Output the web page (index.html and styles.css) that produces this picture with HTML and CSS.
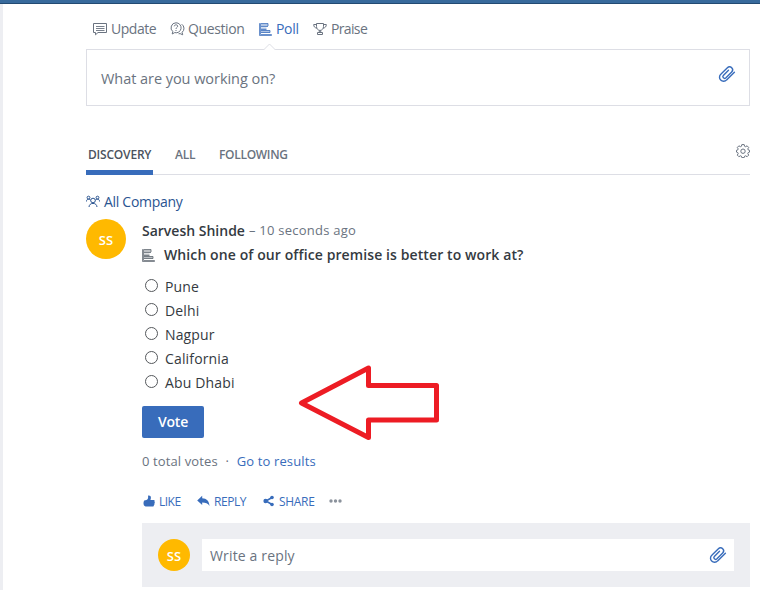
FILE: index.html
```html
<!DOCTYPE html>
<html lang="en">
<head>
    <meta charset="UTF-8">
    <meta name="viewport" content="width=device-width, initial-scale=1.0">
    <title>All Company - Discovery</title>
    <link rel="stylesheet" href="styles.css">
</head>
<body>
    <!-- shared icons -->
    <svg class="sprite" width="0" height="0">
        <symbol id="icon-poll" viewBox="0 0 13 13">
            <path d="M.5.5h1v11h11v1H.5z" fill="none" stroke="currentColor" stroke-opacity=".75"/>
            <path d="M2 1h7v2H2zM2 4.500h5.500v1.500H2zM2 7.500h9v2H2z" fill="currentColor" fill-opacity=".4"/>
            <path d="M2 .5h7M9 .5v2.500M2 3.500h7M2 6.500h5.500M2 9.500h9v-2H2" fill="none" stroke="currentColor" stroke-width=".8"/>
        </symbol>
        <symbol id="icon-clip" viewBox="0 0 18 18">
            <path d="M16.400 7.200 8.600 14.900a4 4 0 0 1-5.900.2 4 4 0 0 1 .1-5.800l6.600-6.600a3 3 0 0 1 4.300 0 3 3 0 0 1 0 4.200l-6 6a1.700 1.700 0 0 1-2.400-2.400l5.200-5.200" fill="none" stroke="currentColor" stroke-width="1.400" stroke-linecap="round"/>
        </symbol>
    </svg>

    <div class="topbar"></div>
    <div class="page">
        <div class="content">
            <div class="publisher-tabs">
                <a class="pub-tab update">
                    <svg width="15" height="14" viewBox="0 0 15 14" fill="none" stroke="currentColor"><path d="M.5 1.500h13v9H5l-2.500 2.300v-2.300h-2z"/><path d="M3 4.500h8.500M3 6.500h8.500M3 8.500h8.500" stroke-width=".9"/></svg>
                    <span>Update</span>
                </a>
                <a class="pub-tab question">
                    <svg width="15" height="14" viewBox="0 0 15 14" fill="none" stroke="currentColor"><path d="M6 .8a5 5 0 0 0-3.200 8.800L2.200 12l2.500-1.400A5 5 0 1 0 6 .8z"/><path d="M4.200 4.300c.2-2 3.500-1.900 3.500-.1 0 1.300-1.700 1.200-1.700 2.700M6 8v1M11.700 2.200a5 5 0 0 1 .4 8.100l.6 2.500-2.600-1.200-1.500.2"/></svg>
                    <span>Question</span>
                </a>
                <a class="pub-tab poll active">
                    <svg width="13" height="13"><use href="#icon-poll"/></svg>
                    <span>Poll</span>
                </a>
                <a class="pub-tab praise">
                    <svg width="14" height="14" viewBox="0 0 14 14" fill="none" stroke="currentColor"><path d="M3.500 1.500h7v3c0 2.400-1.500 3.700-3.500 4-2-.3-3.500-1.600-3.500-4zM3.500 2.500H.7c0 2.200 1 3.300 3.200 3.600M10.500 2.500h2.800c0 2.200-1 3.300-3.200 3.600M6.300 8.500v2M7.700 8.500v2M4.500 12.500v-2h5v2z"/></svg>
                    <span>Praise</span>
                </a>
            </div>

            <div class="publisher-box">
                <span>What are you working on?</span>
                <svg class="clip" width="18" height="18"><use href="#icon-clip"/></svg>
                <svg class="notch" width="13" height="8" viewBox="0 0 13 8"><path d="M0 7.500 6.500 1 13 7.500V8H0z" fill="#fff"/><path d="M.5 7 6.500 1l6 6" fill="none" stroke="#dddee5"/></svg>
            </div>

            <div class="feed-tabs">
                <a class="feed-tab discovery active">DISCOVERY</a>
                <a class="feed-tab all">ALL</a>
                <a class="feed-tab following">FOLLOWING</a>
                <svg class="gear" width="14" height="14" viewBox="0 0 14 14" fill="none" stroke="currentColor"><path d="M5.800.6h2.400l.4 1.700 1 .4 1.500-.9 1.600 1.700-.9 1.400.4 1 1.300.4v1.800l-1.300.5-.4 1 .9 1.500-1.600 1.600-1.500-.9-1 .4-.4 1.400H5.800l-.4-1.400-1-.4-1.500.9-1.600-1.600.9-1.500-.4-1L.5 8.100V6.300l1.300-.4.4-1-.9-1.400 1.600-1.700 1.500.9 1-.4z"/><circle cx="7" cy="7.200" r="2.200"/></svg>
            </div>

            <a class="group">
                <svg width="14" height="13" viewBox="0 0 14 13" fill="none" stroke="currentColor"><circle cx="7" cy="5.500" r="2.300"/><path d="M3 12c.2-2.300 1.700-3.600 4-3.600s3.800 1.300 4 3.600"/><circle cx="2.500" cy="2.600" r="1.400"/><circle cx="11.500" cy="2.600" r="1.400"/><path d="M.4 6.500C.5 4.900 1.300 4.200 2.600 4.200c.9 0 1.500.3 2 .9M13.600 6.500c-.1-1.600-.9-2.300-2.200-2.300-.9 0-1.500.3-2 .9"/></svg>
                <span>All Company</span>
            </a>

            <div class="post">
                <div class="avatar">SS</div>
                <div class="post-body">
                    <div class="byline"><b>Sarvesh Shinde</b><span class="time">– 10 seconds ago</span></div>
                    <div class="poll-title">
                        <svg width="13" height="13"><use href="#icon-poll"/></svg>
                        <span>Which one of our office premise is better to work at?</span>
                    </div>
                    <div class="options">
                        <label><input type="radio" name="office"><span>Pune</span></label>
                        <label><input type="radio" name="office"><span>Delhi</span></label>
                        <label><input type="radio" name="office"><span>Nagpur</span></label>
                        <label><input type="radio" name="office"><span>California</span></label>
                        <label><input type="radio" name="office"><span>Abu Dhabi</span></label>
                    </div>
                    <button class="vote-btn">Vote</button>
                    <div class="totals">
                        <span class="count">0 total votes</span>
                        <span class="dot">·</span>
                        <a>Go to results</a>
                    </div>
                    <div class="actions">
                        <a class="like">
                            <svg width="13" height="13" viewBox="0 0 13 13" fill="currentColor"><path d="M1.200 5.500 3.500 5C5.300 4.300 5.300 2.500 5 .8 6.500.2 7.800 1 7.900 2.500c.1 1-.2 1.700-.5 2.500h3.300c1.100 0 1.300 1.200.7 1.700.7.500.5 1.400-.1 1.700.4.600.200 1.300-.4 1.600.2.900-.3 1.500-1.200 1.500H2.500L1 10.500C.3 9 .3 7 1.200 5.500z"/></svg>
                            <span>LIKE</span>
                        </a>
                        <a class="reply">
                            <svg width="13" height="12" viewBox="0 0 13 12" fill="currentColor"><path d="M5.200.8v2.500c4.300.2 7 2.700 7.300 7.700C11 8.400 8.600 7.500 5.200 7.500V10L.2 5.400z"/></svg>
                            <span>REPLY</span>
                        </a>
                        <a class="share">
                            <svg width="12" height="12" viewBox="0 0 12 12" fill="currentColor"><path d="M9 2.500 3 6l6 3.500" fill="none" stroke="currentColor" stroke-width="1.600"/><circle cx="9" cy="2.500" r="1.800"/><circle cx="2.600" cy="6" r="2.200"/><circle cx="9" cy="9.500" r="1.800"/></svg>
                            <span>SHARE</span>
                        </a>
                        <svg class="more" width="13" height="4" viewBox="0 0 13 4" fill="currentColor"><circle cx="2" cy="2" r="1.700"/><circle cx="6.500" cy="2" r="1.700"/><circle cx="11" cy="2" r="1.700"/></svg>
                    </div>
                    <div class="reply-area">
                        <div class="avatar small">SS</div>
                        <div class="reply-input">
                            <span>Write a reply</span>
                            <svg class="clip" width="18" height="18"><use href="#icon-clip"/></svg>
                        </div>
                    </div>
                </div>
            </div>
        </div>
    </div>

    <!-- callout pointing at the vote button -->
    <svg class="arrow" width="144" height="80" viewBox="0 0 144 80"><path d="M4.500 40 71.500 5v17.500h68v34.500h-68v17.500z" fill="none" stroke="#ed1c24" stroke-width="5" stroke-linejoin="round"/></svg>
</body>
</html>
```

FILE: styles.css
```css
* {
    box-sizing: border-box;
}

body {
    margin: 0;
    height: 590px;
    overflow: hidden;
    background: #fff;
    color: #343a41;
    font-family: 'Open Sans', 'Noto Sans', sans-serif;
    font-size: 14px;
}

svg {
    display: block;
    flex: none;
}

.sprite {
    position: absolute;
}

span, b, a {
    white-space: nowrap;
}

.topbar {
    height: 4px;
    background: #386a9c;
    border-bottom: 1px solid #234a72;
}

.page {
    height: 586px;
    border-left: 3px solid #edeef2;
    padding: 11px 10px 0 83px;
}

.publisher-tabs {
    display: flex;
    height: 28px;
    padding: 0 0 0 7px;
    color: #6a7380;
}

.pub-tab {
    display: flex;
    align-items: center;
    height: 28px;
    gap: 3px;
}

.pub-tab span {
    margin-top: -1px;
}

.update { width: 77px; letter-spacing: -0.45px; }
.question { width: 89px; letter-spacing: -0.4px; }
.poll { width: 54px; gap: 4px; letter-spacing: -0.3px; }
.praise { gap: 4px; letter-spacing: -0.65px; }

.pub-tab.active {
    color: #386cbb;
}

.publisher-box {
    position: relative;
    display: flex;
    justify-content: space-between;
    height: 57px;
    margin-top: 6px;
    padding: 15px 13px 0 14px;
    border: 1px solid #dddee5;
    color: #6a7380;
    font-size: 14.5px;
    line-height: 28px;
    letter-spacing: -0.05px;
}

.clip {
    color: #386cbb;
}

.notch {
    position: absolute;
    left: 176px;
    top: -7px;
}

.feed-tabs {
    display: flex;
    height: 41px;
    margin-top: 28px;
    border-bottom: 1px solid #dddee5;
    color: #6a7380;
    font-size: 12px;
    font-weight: 600;
}

.feed-tab {
    height: 41px;
    line-height: 42px;
}

.discovery { width: 67px; padding-left: 2px; margin-right: 22px; letter-spacing: -0.2px; }
.all { width: 44px; letter-spacing: -0.2px; }
.following { letter-spacing: -0.3px; }

.feed-tab.active {
    border-bottom: 5px solid #386cbb;
    color: #4b535e;
}

.gear {
    margin: 10px 0 0 auto;
}

.group {
    display: flex;
    align-items: center;
    gap: 4px;
    height: 20px;
    margin-top: 16px;
    color: #2a5491;
    letter-spacing: -0.3px;
}

.post {
    display: flex;
    gap: 16px;
    margin-top: 8px;
}

.avatar {
    flex: none;
    width: 40px;
    height: 40px;
    border-radius: 50%;
    background: #ffb900;
    color: #fff;
    text-align: center;
    font-size: 13px;
    font-weight: 600;
    line-height: 42px;
}

.avatar.small {
    width: 32px;
    height: 32px;
    line-height: 34px;
}

.post-body {
    flex: 1;
}

.byline {
    display: flex;
    gap: 4px;
    height: 24px;
    line-height: 23px;
}

.byline b {
    font-weight: 600;
}

.time {
    color: #6a7380;
    font-size: 13px;
    letter-spacing: 0.25px;
}

.poll-title {
    display: flex;
    align-items: center;
    gap: 9px;
    height: 24px;
    font-weight: 600;
    letter-spacing: 0.1px;
}

.poll-title span {
    margin-top: -2px;
}

.poll-title svg {
    color: #5c646d;
}

.options {
    margin-top: 7px;
    letter-spacing: 0.15px;
}

.options label {
    display: flex;
    align-items: center;
    height: 24px;
}

.options input {
    appearance: none;
    width: 13px;
    height: 13px;
    margin: 0 7px 2px 3px;
    border: 1px solid #55585c;
    border-radius: 50%;
}

.vote-btn {
    display: block;
    width: 62px;
    height: 32px;
    margin-top: 12px;
    padding: 0;
    border: none;
    border-radius: 2px;
    background: #386cbb;
    color: #fff;
    font: 600 14px/32px 'Open Sans', 'Noto Sans', sans-serif;
    letter-spacing: -0.2px;
}

.totals {
    display: flex;
    height: 20px;
    margin-top: 13px;
    color: #6a7380;
    font-size: 13px;
    line-height: 20px;
    letter-spacing: 0.12px;
}

.dot {
    width: 19px;
    text-align: center;
}

.totals a {
    color: #386cbb;
}

.actions {
    display: flex;
    align-items: center;
    height: 20px;
    margin-top: 20px;
    color: #386cbb;
    font-size: 12px;
}

.actions a {
    display: flex;
    align-items: center;
    gap: 4px;
}

.like { width: 55px; padding-left: 1px; letter-spacing: -0.5px; }
.actions .like { gap: 3px; }
.reply { width: 66px; letter-spacing: -0.45px; }
.share { width: 66px; letter-spacing: -0.3px; }

.more {
    color: #8b929c;
}

.reply-area {
    display: flex;
    gap: 12px;
    height: 64px;
    margin-top: 12px;
    padding: 16px;
    background: #edeef2;
}

.reply-input {
    display: flex;
    justify-content: space-between;
    flex: 1;
    height: 32px;
    padding: 0 7px 0 8px;
    background: #fff;
    color: #6a7380;
    line-height: 33px;
    letter-spacing: 0.15px;
}

.reply-input .clip {
    margin-top: 7px;
}

.arrow {
    position: absolute;
    left: 297px;
    top: 363px;
}
```
